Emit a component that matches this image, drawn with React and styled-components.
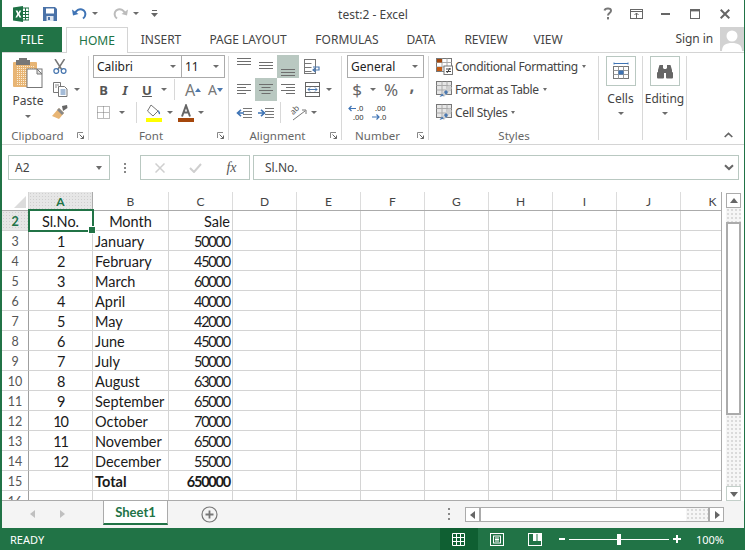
import React from "react";
import styled, { createGlobalStyle } from "styled-components";

const Global = createGlobalStyle`
  html, body { margin: 0; padding: 0; background: #fff; overflow: hidden; }
  * { box-sizing: border-box; }
`;
const UI = `"Noto Sans", "Open Sans", sans-serif`;
const CELL = `Lato, "Noto Sans", sans-serif`;
const GREEN = "#217346";

const Window = styled.div`
  width: 745px; height: 550px; background: #fff; display: flex; flex-direction: column;
  border-left: 2px solid ${GREEN}; border-right: 1px solid ${GREEN};
  font-family: ${UI}; color: #444; overflow: hidden;
`;
const TitleBar = styled.div`
  height: 27px; display: grid; grid-template-columns: 1fr auto 1fr; align-items: center; flex: none;
`;
const Qat = styled.div`display: flex; align-items: center; padding-left: 11px;`;
const Slot = styled.div`
  width: ${p => p.$w}px; height: ${p => p.$h || 23}px; display: flex; align-items: center; justify-content: center; flex: none;
  font-size: ${p => p.$fs || 12}px; color: ${p => p.$c || "#555"}; font-weight: ${p => p.$b ? 700 : 400};
  font-style: ${p => p.$i ? "italic" : "normal"};
  text-decoration: ${p => p.$u ? "underline" : "none"};
  padding-bottom: ${p => p.$pb || 0}px;
  background: ${p => p.$active ? "#b9c8c1" : "transparent"};
  font-family: ${p => p.$serif ? `"Liberation Serif", serif` : "inherit"};
`;
const Title = styled.div`font-size: 12px; color: #444; padding-top: 1px;`;
const WinButtons = styled.div`display: flex; justify-content: flex-end; align-items: center;`;

const TabRow = styled.div`
  height: 26px; display: flex; flex: none; border-bottom: 1px solid #d4d4d4; position: relative; align-items: stretch;
`;
const FileTab = styled.div`
  width: 60px; height: 25px; background: ${GREEN}; color: #fff; font-size: 12px; display: flex; align-items: center; justify-content: center; margin-right: 4px;
`;
const Tab = styled.div`
  width: ${p => p.$w}px; height: ${p => p.$active ? 26 : 25}px; display: flex; align-items: center; justify-content: center; font-size: 12px;
  color: ${p => p.$active ? GREEN : "#444"}; background: #fff; z-index: 1;
  border: ${p => p.$active ? "1px solid #d4d4d4" : "none"}; border-bottom: none;
`;
const SignIn = styled.div`
  margin-left: auto; display: flex; align-items: flex-start; font-size: 12px; color: #444; gap: 7px; letter-spacing: -.1px;
  span { line-height: 24px; }
`;
const Ribbon = styled.div`
  height: 92px; display: flex; flex: none; border-bottom: 1px solid #d4d4d4; padding-top: 2px;
`;
const Group = styled.div`
  width: ${p => p.$w}px; flex: none; display: flex; flex-direction: column; position: relative;
  &::after { content: ""; display: ${p => p.$last ? "none" : "block"}; position: absolute; right: 0; top: 1px; bottom: 4px; width: 1px; background: #d8d8d8; }
`;
const GroupBody = styled.div`height: 72px; display: flex; flex: none; padding-left: ${p => p.$pl || 0}px;`;
const Stack = styled.div`display: flex; flex-direction: column; align-items: ${p => p.$center ? "center" : "stretch"}; width: ${p => p.$w ? p.$w + "px" : "auto"}; flex: none;`;
const Row = styled.div`display: flex; align-items: center; height: 23px; flex: none;`;
const GroupFoot = styled.div`display: flex; align-items: center; height: 16px; padding-right: ${p => p.$pr ?? 5}px; justify-content: ${p => p.$end ? "flex-end" : "flex-start"};`;
const GroupLabel = styled.div`flex: 1; text-align: center; font-size: 11.5px; color: #666;`;
const Launcher = styled.svg`width: 7px; height: 7px; margin-left: 4px; flex: none;`;
const Caret = styled.span`
  display: inline-block; width: 0; height: 0; flex: none;
  border-left: ${p => p.$s || 3.5}px solid transparent; border-right: ${p => p.$s || 3.5}px solid transparent;
  border-top: ${p => p.$s ? 3 : 4}px solid #6c6c6c;
  margin-left: ${p => p.$ml || 0}px;
`;
const VSep = styled.div`width: 1px; height: 21px; background: #d8d8d8; flex: none; margin: 0 ${p => p.$m || 5}px;`;
const PasteLabel = styled.div`font-size: 12px; color: #444; margin-top: 1px; line-height: 17px;`;
const Select = styled.div`
  height: 23px; width: ${p => p.$w}px; border: 1px solid #ababab; margin-left: ${p => p.$ml || 0}px; display: flex; align-items: center; justify-content: space-between;
  padding: 0 5px 0 3px; font-size: 12px; color: #222; background: #fff; flex: none;
`;
const StyleRow = styled.div`
  display: flex; align-items: center; height: 23px; padding-left: 7px; gap: 2px; font-size: 12px; color: #444; white-space: nowrap; letter-spacing: -.36px;
`;
const BigBtn = styled.div`display: flex; flex-direction: column; align-items: center; padding: 1px 1px 0 0; width: 100%;`;
const BigBox = styled.div`
  width: 30px; height: 30px; border: 1px solid #b9c8c1; display: flex; align-items: center; justify-content: center; margin-bottom: 4px;
`;
const BigText = styled.div`font-size: 12px; color: #444; line-height: 17px; margin-bottom: 5px;`;

const FormulaRow = styled.div`
  height: 47px; flex: none; display: flex; padding: 10px 5px 12px 6px; align-items: stretch;
`;
const NameBox = styled.div`
  width: 102px; border: 1px solid #b9c8c1; display: flex; align-items: center; justify-content: space-between; padding: 0 7px 0 6px; font-size: 12px; color: #444;
`;
const Dots = styled.div`
  width: 30px; display: flex; flex-direction: column; align-items: center; justify-content: center; gap: 2px;
  i { width: 2px; height: 2px; background: #888; display: block; }
`;
const FxBox = styled.div`
  width: 110px; border: 1px solid #b9c8c1; display: flex; align-items: center; padding-left: 11px; margin-right: 3px;
`;
const FormulaInput = styled.div`
  flex: 1; border: 1px solid #b9c8c1; display: flex; align-items: center; justify-content: space-between; padding: 0 4px 0 11px; font-size: 12px; color: #444;
`;

const SheetArea = styled.div`height: 309px; flex: none; display: flex;`;
const Grid = styled.div`
  width: 720px; flex: none; height: 309px; overflow: hidden; position: relative; border-bottom: 1px solid #ababab; border-right: 1px solid #ababab;
`;
const HeadRow = styled.div`display: flex; height: 19px; border-bottom: 1px solid #ababab;`;
const Corner = styled.div`
  width: 27px; flex: none; border-right: 1px solid #d4d4d4; display: flex; align-items: flex-end; justify-content: flex-end; padding: 0 2px 2px 0;
`;
const ColHead = styled.div`
  width: ${p => p.$w}px; flex: none; display: flex; align-items: center; justify-content: center; font-size: 12px; padding-top: 1px;
  border-right: 1px solid ${p => p.$sel ? "#ababab" : "#dcdcdc"};
  color: ${p => p.$sel ? GREEN : "#444"}; font-weight: ${p => p.$sel ? 700 : 400};
  background: ${p => p.$sel ? "radial-gradient(#cfcfcf 0.7px, #e6e6e6 0.8px) 0 0 / 3px 3px" : "#fff"};
  font-family: ${CELL};
`;
const DataRow = styled.div`display: flex; height: 20px;`;
const RowHead = styled.div`
  width: 27px; flex: none; display: flex; align-items: center; justify-content: center; font-size: 12.5px; font-family: ${CELL};
  border-right: 1px solid #9f9f9f; border-bottom: 1px solid #d4d4d4; padding-top: 1px;
  color: ${p => p.$sel ? GREEN : "#555"}; font-weight: ${p => p.$sel ? 700 : 400};
  background: ${p => p.$sel ? "radial-gradient(#cfcfcf 0.7px, #e6e6e6 0.8px) 0 0 / 3px 3px" : "#fff"};
`;
const Cell = styled.div`
  width: ${p => p.$w}px; flex: none; border-right: 1px solid #d4d4d4; border-bottom: 1px solid #d4d4d4;
  font-family: ${CELL}; font-size: 14.5px; color: #1a1a1a; display: flex; align-items: center; padding: 1px 2px 0 2px; white-space: nowrap;
  justify-content: ${p => p.$a === "r" ? "flex-end" : p.$a === "c" ? "center" : "flex-start"};
  font-weight: ${p => p.$b ? 700 : 400};
  letter-spacing: ${p => p.$num ? "-1.2px" : "0"};
`;
const Selection = styled.div`
  position: absolute; left: 26px; top: 17px; width: 66px; height: 23px; border: 2px solid ${GREEN}; pointer-events: none;
  &::after { content: ""; position: absolute; right: -4px; bottom: -4px; width: 6px; height: 6px; background: ${GREEN}; border: 1px solid #fff; }
`;
const VScroll = styled.div`
  flex: 1; padding: 1px 3px 0 4px; display: flex; flex-direction: column;
`;
const ScrollBtn = styled.div`
  width: 15px; height: 15px; flex: none; border: 1px solid ${p => p.$strong ? "#ababab" : "#c3cfc9"}; display: flex; align-items: center; justify-content: center; background: #fff;
`;
const Track = styled.div`
  flex: ${p => p.$flex || "none"}; ${p => p.$size ? `${p.$dir === "h" ? "width" : "height"}: ${p.$size}px;` : ""}
  background: radial-gradient(#d8d8d8 0.7px, #f6f6f6 0.8px) 0 0 / 4px 4px;
`;
const VThumb = styled.div`height: 193px; width: 15px; flex: none; border: 2px solid #ababab; background: #fff;`;

const Strip = styled.div`height: 27px; flex: none; display: flex; align-items: flex-start; background: #f4f4f4;`;
const SheetTab = styled.div`
  width: 65px; height: 24px; background: #fff; border: 1px solid #ababab; border-top: none; border-bottom: 2px solid ${GREEN};
  color: ${GREEN}; font-family: ${CELL}; font-weight: 700; font-size: 13px; display: flex; align-items: center; justify-content: center;
`;
const NavZone = styled.div`width: 101px; height: 26px; display: flex; align-items: center; flex: none; padding-left: 27px; gap: 21px;`;
const AddBtn = styled.div`width: 17px; height: 17px; margin: 5px 0 0 33px; flex: none; display: flex;`;
const StripDots = styled(Dots)`width: 4px; height: 26px; margin-left: 229px; gap: 3px;`;
const HScroll = styled.div`display: flex; height: 15px; margin: 6px 0 0 14px; width: 259px; flex: none; border: 1px solid #ababab;`;
const HBtn = styled.div`width: 15px; flex: none; background: #fff; display: flex; align-items: center; justify-content: center; border-${p => p.$side}: 2px solid #ababab;`;
const HThumb = styled.div`flex: 1; background: #fff;`;

const StatusBar = styled.div`
  height: 22px; background: ${GREEN}; color: #fff; display: flex; align-items: center; padding: 0 20px 0 8px; font-size: 11px; flex: none;
`;
const Ready = styled.div`margin-right: auto;`;
const ViewBtn = styled.div`
  width: 38px; height: 22px; display: flex; align-items: center; justify-content: center; background: ${p => p.$active ? "#0f5f32" : "transparent"};
`;
const Zoom = styled.div`display: flex; align-items: center; margin-left: 5px; gap: 4px;`;
const Slider = styled.div`
  width: 100px; height: 1px; background: #fff; position: relative;
  &::after { content: ""; position: absolute; left: 48px; top: -5px; width: 4px; height: 11px; background: #fff; }
`;
const Percent = styled.div`margin-left: 15px; font-size: 11px;`;

const I = ({ w, h, children, vb }) => <svg width={w} height={h} viewBox={vb || `0 0 ${w} ${h}`} fill="none" style={{ display: "block", flex: "none" }}>{children}</svg>;

const ExcelLogo = () => <I w={16} h={16}>
  <rect x="6" y="2" width="10" height="12" fill="#fff" stroke="#1e6f42" />
  <path d="M9.5 2v12M12.5 2v12M6 5.5h10M6 8.5h10M6 11.5h10" stroke="#1e6f42" />
  <path d="M0 1.5 10 0v16L0 14.5z" fill="#1e7145" />
  <path d="M2.6 4.6h1.9L5.5 6.8l1-2.2h1.8L6.5 8l1.9 3.6H6.5L5.3 9.2 4.2 11.6H2.4L4.3 8z" fill="#fff" />
</I>;
const SaveIcon = () => <I w={14} h={14}>
  <path d="M0 0h12l2 2v12H0z" fill="#4a72a8" />
  <rect x="3" y="1.5" width="8" height="5" fill="#fff" />
  <rect x="3.5" y="9" width="7" height="5" fill="#dfe6f0" />
  <rect x="5" y="10" width="2" height="3" fill="#4a72a8" />
</I>;
const Undo = ({ c, flip }) => <I w={15} h={13}>
  <g transform={flip ? "translate(15 0) scale(-1 1)" : undefined}>
    <path d="M3 6.5C4 3 7.5 1.5 10 2.5c3 1 4 4 3 6.5-.5 1.2-1.3 2-2 2.6" stroke={c} strokeWidth="2" />
    <path d="M0 2.5 1 8.5 6.5 7z" fill={c} />
  </g>
</I>;
const Customize = () => <I w={7} h={8}><path d="M1 .5h5" stroke="#666" /><path d="M0 3h7L3.5 7z" fill="#666" /></I>;
const Help = () => <I w={10} h={13}><path d="M1.5 3.5C2 1 8 .5 8 3.7c0 2.3-3 2.2-3 4.8" stroke="#777" strokeWidth="2" /><rect x="4" y="10" width="2" height="2.4" fill="#777" /></I>;
const RibbonOpt = () => <I w={13} h={10}><rect x=".5" y=".5" width="12" height="9" stroke="#666" /><path d="M.5 2.5h12" stroke="#666" /><path d="M6.5 9V4M4.5 6l2-2 2 2" stroke="#666" /></I>;
const Min = () => <I w={9} h={2}><rect width="9" height="2" fill="#666" /></I>;
const Max = () => <I w={10} h={10}><rect x=".5" y=".5" width="9" height="9" stroke="#666" /><rect width="10" height="2.4" fill="#666" /></I>;
const CloseX = () => <I w={10} h={10}><path d="M.7.7l8.6 8.6M9.3.7.7 9.3" stroke="#666" strokeWidth="2" /></I>;
const Avatar = () => <I w={24} h={24}>
  <rect width="24" height="24" fill="#d2d2d2" />
  <circle cx="12" cy="9" r="5.5" fill="#fff" />
  <path d="M2 24c0-6 4-8 10-8s10 2 10 8z" fill="#fff" />
</I>;
const PasteIcon = () => <I w={30} h={30}>
  <defs><pattern id="pd" width="2" height="2" patternUnits="userSpaceOnUse"><rect width="2" height="2" fill="#e8b574" /><rect width="1" height="1" fill="#fbeed6" /></pattern></defs>
  <rect x="0" y="4" width="24" height="25" rx="1" fill="#e8b574" />
  <path d="M3 8h18v20H3z" fill="url(#pd)" />
  <path d="M6 0h8v2h3v5H3V2h3z" fill="#777" />
  <rect x="14" y="11" width="15" height="18.5" fill="#fff" stroke="#777" />
  <path d="M24 11l5 5h-5z" fill="#ddd" stroke="#777" />
</I>;
const Scissors = () => <I w={14} h={15}>
  <path d="M2 0l7 11M11.5 0 4.5 11" stroke="#777" strokeWidth="1.5" />
  <circle cx="3.3" cy="12" r="2.4" stroke="#4a78b0" strokeWidth="1.3" />
  <circle cx="10.6" cy="12" r="2.4" stroke="#4a78b0" strokeWidth="1.3" />
</I>;
const CopyIcon = () => <I w={15} h={15}>
  <path d="M.5.5h7v10h-7z" fill="#fff" stroke="#777" />
  <path d="M5.5 4.5h6l2.5 2.5v7.5H5.5z" fill="#fff" stroke="#777" />
  <path d="M7.5 8h5M7.5 10h5M7.5 12h5" stroke="#4a78b0" />
  <path d="M2 3h4M2 5h2" stroke="#888" />
</I>;
const BrushIcon = () => <I w={16} h={15}>
  <path d="M10 1 15 0 15.5 3 11 6z" fill="#666" />
  <path d="M7 3l5 5-5 6L0 11z" fill="#e8b574" />
  <path d="M7 3l5 5-2 2-5-5z" fill="#888" />
</I>;
const Launch = () => <Launcher viewBox="0 0 7 7" fill="none"><path d="M.5 6V.5H6" stroke="#888" /><path d="M2.5 2.5 6.5 6.5M6.5 3.5v3h-3" stroke="#666" /></Launcher>;
const BordersIcon = () => <I w={13} h={13}><path d="M.5.5h12v12H.5zM6.5.5v12M.5 6.5h12" stroke="#777" strokeDasharray="1 1" /></I>;
const FillIcon = () => <I w={16} h={18}>
  <path d="M5 1 12 7 7 12 1.5 7z" fill="#fff" stroke="#777" />
  <path d="M12 6c1.5 1 2.5 3 2 4-.7 1-2-.5-2-4z" fill="#4a78b0" />
  <rect y="14" width="16" height="4" fill="#ffff00" />
</I>;
const ColorA = () => <I w={16} h={18}><path d="M4 12.5 8 1.5 12 12.5M5.5 8.5h5" stroke="#666" strokeWidth="2" /><rect y="14" width="16" height="4" fill="#a5470c" /></I>;
const Tri = ({ up = true }) => <I w={6} h={4}><path d={up ? "M0 4h6L3 0z" : "M0 0h6L3 4z"} fill="#4a78b0" /></I>;
const Lines = ({ ws, al, y0, gap = 3 }) => <I w={14} h={23}>
  {ws.map((w, i) => {
    const x = al === "l" ? 0 : al === "r" ? 14 - w : (14 - w) / 2;
    return <rect key={i} x={x} y={y0 + i * gap} width={w} height="1" fill="#6e6e6e" />;
  })}
</I>;
const Wrap = () => <I w={17} h={16}>
  <path d="M.5.5h11M.5 4.5h7M.5 8.5h7M.5 12.5h7" stroke="#777" />
  <rect x=".5" y=".5" width="11" height="14" stroke="#777" />
  <path d="M9 8h6v3H9.5M11.5 9 9 11l2.5 2" stroke="#4a78b0" strokeWidth="1.2" />
</I>;
const Merge = () => <I w={15} h={15}>
  <rect x=".5" y=".5" width="14" height="14" stroke="#666" />
  <path d="M.5 4.5h14M.5 10.5h14" stroke="#666" />
  <path d="M3 7.5h9M3 7.5l2-2M3 7.5l2 2M12 7.5l-2-2M12 7.5l-2 2" stroke="#4a78b0" />
</I>;
const Indent = ({ flip }) => <I w={16} h={10}>
  <path d="M7 .5h9M7 3.5h9M7 6.5h9M7 9.5h9" stroke="#777" />
  <g transform={flip ? "translate(8 0) scale(-1 1)" : undefined}>
    <path d="M8 5H2M5 1.8 1.5 5 5 8.2" stroke="#3f74b5" strokeWidth="1.6" />
  </g>
</I>;
const Orient = () => <I w={20} h={20}>
  <g transform="rotate(-45 8 8)"><text x="3" y="9" fontSize="8" fontFamily="Noto Sans" fill="#555">ab</text></g>
  <path d="M5 17 17 8M14 7h4v4" stroke="#777" />
</I>;
const DecIcon = ({ a, b, dir }) => <I w={20} h={18}>
  <text x={dir === "l" ? 10 : 6} y="7" fontSize="7.5" fontFamily="Noto Sans" fill="#333">{a}</text>
  <text x={dir === "l" ? 6 : 11} y="16" fontSize="7.5" fontFamily="Noto Sans" fill="#333">{b}</text>
  <path d={dir === "l" ? "M9 4.5H2M4.5 2 2 4.5 4.5 7" : "M3 13h7M7.5 10.5 10 13l-2.5 2.5"} stroke="#3f74b5" strokeWidth="1.2" />
</I>;
const CondIcon = () => <I w={17} h={17}>
  <rect x=".5" y=".5" width="15" height="13" stroke="#777" fill="#fff" />
  <path d="M.5 4.5h15M.5 9h15M6 .5v13M11 .5v13" stroke="#aaa" />
  <rect x="1" y="1" width="5" height="3.5" fill="#a5470c" /><rect x="1" y="9" width="5" height="4" fill="#c65b12" />
  <rect x="8" y="8" width="8.5" height="8.5" fill="#fff" stroke="#777" />
  <path d="M10 11h5M10 13.5h5M14 10l-3 5" stroke="#444" />
</I>;
const TableIcon = () => <I w={17} h={17}>
  <rect x=".5" y=".5" width="15" height="13" stroke="#777" fill="#e6e6e6" />
  <path d="M.5 4.5h15M.5 9h15M6 .5v13M11 .5v13" stroke="#aaa" />
  <path d="M5 14 13 4l3 3-8 9z" fill="#cfcfcf" />
  <path d="M3.5 16 6 12.5l2 2z" fill="#4a78b0" />
  <path d="M8 11l2-2 2 2-2 3z" fill="#4a78b0" />
</I>;
const CellsIcon = () => <I w={16} h={18}>
  <path d="M1 1.5h14M1 .5v2M15 .5v2" stroke="#3f74b5" />
  <rect x=".5" y="4.5" width="15" height="12" stroke="#777" />
  <path d="M.5 8.5h15M.5 12.5h15M5.5 4.5v12M10.5 4.5v12" stroke="#999" />
  <rect x="5.5" y="8.5" width="5" height="4" fill="#3f74b5" />
</I>;
const Binoc = () => <I w={16} h={15}>
  <path d="M2.5 1h3.5v3L7 5v5H1V6zM13.5 1H10v3L9 5v5h6V6z" fill="#666" />
  <rect x="0" y="8" width="7" height="6.5" rx="1" fill="#666" /><rect x="9" y="8" width="7" height="6.5" rx="1" fill="#666" />
  <rect x="6" y="5" width="4" height="4" fill="#666" />
</I>;
const Collapse = () => <I w={9} h={6}><path d="M.7 5 4.5 1.4 8.3 5" stroke="#666" strokeWidth="1.7" /></I>;
const Chevron = () => <I w={10} h={7}><path d="M1 1.2 5 5l4-3.8" stroke="#666" strokeWidth="2" /></I>;
const XIcon = () => <I w={10} h={10}><path d="M.5.5l9 9M9.5.5l-9 9" stroke="#cfcfcf" strokeWidth="1.5" /></I>;
const Check = () => <I w={13} h={10}><path d="M1 5l4 4 7-8" stroke="#cfcfcf" strokeWidth="2" /></I>;
const CornerTri = () => <I w={12} h={12}><path d="M12 0v12H0z" fill="#dcdcdc" /></I>;
const Arrow = ({ d, c = "#666", s = 8 }) => <I w={s} h={s} vb="0 0 8 8"><path d={{ u: "M0 6h8L4 1z", d: "M0 2h8L4 7z", l: "M6 0v8L1 4z", r: "M2 0v8l5-4z" }[d]} fill={c} /></I>;
const Plus = () => <I w={17} h={17}><circle cx="8.5" cy="8.5" r="7.5" stroke="#777" strokeWidth="1.2" /><path d="M4.5 8.5h8M8.5 4.5v8" stroke="#777" strokeWidth="1.8" /></I>;
const VNormal = () => <I w={13} h={13}><path d="M.5.5h12v12H.5zM4.5.5v12M8.5.5v12M.5 4.5h12M.5 8.5h12" stroke="#fff" /></I>;
const VLayout = () => <I w={14} h={13}><rect x=".5" y=".5" width="13" height="12" stroke="#fff" /><rect x="3.5" y="3" width="7" height="7" stroke="#fff" /><path d="M5 5h4M5 6.5h4M5 8h4" stroke="#fff" /></I>;
const VBreak = () => <I w={14} h={13}><rect x=".5" y=".5" width="13" height="12" stroke="#fff" /><rect x="5" y="1" width="3.5" height="7" fill="#fff" /><rect x="9.5" y="1" width="3.5" height="7" fill="#fff" /></I>;
const ZMinus = () => <I w={6} h={2}><rect width="6" height="2" fill="#fff" /></I>;
const ZPlus = () => <I w={8} h={8}><path d="M0 4h8M4 0v8" stroke="#fff" strokeWidth="2" /></I>;

const cols = [["A", 64], ["B", 76], ["C", 64], ["D", 64], ["E", 64], ["F", 64], ["G", 64], ["H", 64], ["I", 64], ["J", 64], ["K", 64]];
const data = [
  [2, "Sl.No.", "Month", "Sale"], [3, 1, "January", 50000], [4, 2, "February", 45000], [5, 3, "March", 60000],
  [6, 4, "April", 40000], [7, 5, "May", 42000], [8, 6, "June", 45000], [9, 7, "July", 50000],
  [10, 8, "August", 63000], [11, 9, "September", 65000], [12, 10, "October", 70000], [13, 11, "November", 65000],
  [14, 12, "December", 55000], [15, "", "Total", 650000], [16, "", "", ""],
];

export default function App() {
  return (
    <>
      <Global />
      <Window>
        <TitleBar>
          <Qat>
            <ExcelLogo />
            <Slot $w={14} /><SaveIcon />
            <Slot $w={15} /><Undo c="#3f74b5" />
            <Slot $w={16}><Caret $s={3} /></Slot>
            <Slot $w={10} /><Undo c="#bcbcbc" flip />
            <Slot $w={16}><Caret $s={3} /></Slot>
            <Slot $w={7} /><Customize />
          </Qat>
          <Title>test:2 - Excel</Title>
          <WinButtons>
            <Slot $w={28}><Help /></Slot>
            <Slot $w={29}><RibbonOpt /></Slot>
            <Slot $w={29}><Min /></Slot>
            <Slot $w={30}><Max /></Slot>
            <Slot $w={29}><CloseX /></Slot>
            <Slot $w={5} />
          </WinButtons>
        </TitleBar>
        <TabRow>
          <FileTab>FILE</FileTab>
          <Tab $w={62} $active>HOME</Tab>
          <Tab $w={66}>INSERT</Tab>
          <Tab $w={108}>PAGE LAYOUT</Tab>
          <Tab $w={90}>FORMULAS</Tab>
          <Tab $w={58}>DATA</Tab>
          <Tab $w={72}>REVIEW</Tab>
          <Tab $w={52}>VIEW</Tab>
          <SignIn><span>Sign in</span><Avatar /></SignIn>
        </TabRow>
        <Ribbon>
          <Group $w={87}>
            <GroupBody $pl={4}>
              <Stack $w={44} $center>
                <Slot $w={30} $h={36}><PasteIcon /></Slot>
                <PasteLabel>Paste</PasteLabel>
                <Slot $w={20} $h={14}><Caret $s={3} /></Slot>
              </Stack>
              <Stack>
                <Row><Slot $w={20}><Scissors /></Slot></Row>
                <Row><Slot $w={20}><CopyIcon /></Slot><Caret $s={3} $ml={4} /></Row>
                <Row><Slot $w={20}><BrushIcon /></Slot></Row>
              </Stack>
            </GroupBody>
            <GroupFoot><GroupLabel>Clipboard</GroupLabel><Launch /></GroupFoot>
          </Group>
          <Group $w={140}>
            <GroupBody $pl={4}>
              <Stack>
                <Row>
                  <Select $w={89}><span>Calibri</span><Caret $s={3} /></Select>
                  <Select $w={44} $ml={-1}><span>11</span><Caret $s={3} /></Select>
                </Row>
                <Row>
                  <Slot $w={21} $b $fs={13}>B</Slot>
                  <Slot $w={22} $i $fs={13} $b>I</Slot>
                  <Slot $w={22} $b $fs={13} $u>U</Slot>
                  <Slot $w={11}><Caret $s={3} /></Slot>
                  <VSep $m={5} />
                  <Slot $w={26} $fs={16} $c="#777"><span>A</span><Tri /></Slot>
                  <Slot $w={19} $fs={14} $c="#777"><span>A</span><Tri up={false} /></Slot>
                </Row>
                <Row>
                  <Slot $w={21}><BordersIcon /></Slot>
                  <Slot $w={16}><Caret $s={3} /></Slot>
                  <VSep $m={6} />
                  <Slot $w={22}><FillIcon /></Slot>
                  <Slot $w={10}><Caret $s={3} /></Slot>
                  <Slot $w={22}><ColorA /></Slot>
                  <Slot $w={8}><Caret $s={3} /></Slot>
                </Row>
              </Stack>
            </GroupBody>
            <GroupFoot><GroupLabel>Font</GroupLabel><Launch /></GroupFoot>
          </Group>
          <Group $w={113}>
            <GroupBody $pl={4}>
              <Stack>
                <Row>
                  <Slot $w={22}><Lines ws={[14, 14, 14]} al="l" y0={3} /></Slot>
                  <Slot $w={22}><Lines ws={[14, 14, 14]} al="l" y0={7} /></Slot>
                  <Slot $w={22} $active><Lines ws={[14, 14, 14]} al="l" y0={14} /></Slot>
                  <Slot $w={26}><Wrap /></Slot>
                </Row>
                <Row>
                  <Slot $w={22}><Lines ws={[14, 9, 14, 9]} al="l" y0={6} /></Slot>
                  <Slot $w={22} $active><Lines ws={[14, 9, 14, 9]} al="c" y0={6} /></Slot>
                  <Slot $w={22}><Lines ws={[14, 9, 14, 9]} al="r" y0={6} /></Slot>
                  <Slot $w={26}><Merge /></Slot>
                  <Slot $w={8}><Caret $s={3} /></Slot>
                </Row>
                <Row>
                  <Slot $w={22}><Indent /></Slot>
                  <Slot $w={22}><Indent flip /></Slot>
                  <VSep $m={3} />
                  <Slot $w={27}><Orient /></Slot>
                  <Caret $s={3} />
                </Row>
              </Stack>
            </GroupBody>
            <GroupFoot><GroupLabel>Alignment</GroupLabel><Launch /></GroupFoot>
          </Group>
          <Group $w={87}>
            <GroupBody $pl={5}>
              <Stack>
                <Select $w={77}><span>General</span><Caret $s={3} /></Select>
                <Row>
                  <Slot $w={20} $fs={17} $c="#666">$</Slot>
                  <Slot $w={12}><Caret $s={3} /></Slot>
                  <Slot $w={24} $fs={17} $c="#666">%</Slot>
                  <Slot $w={18} $fs={17} $b $c="#666" $pb={9}>,</Slot>
                </Row>
                <Row>
                  <Slot $w={20}><DecIcon a=".0" b=".00" dir="l" /></Slot>
                  <Slot $w={24}><DecIcon a=".00" b=".0" dir="r" /></Slot>
                </Row>
              </Stack>
            </GroupBody>
            <GroupFoot><GroupLabel>Number</GroupLabel><Launch /></GroupFoot>
          </Group>
          <Group $w={170}>
            <GroupBody>
              <Stack>
                <StyleRow><CondIcon /><span>Conditional Formatting</span><Caret $s={2.5} $ml={2} /></StyleRow>
                <StyleRow><TableIcon /><span>Format as Table</span><Caret $s={2.5} $ml={2} /></StyleRow>
                <StyleRow><TableIcon /><span>Cell Styles</span><Caret $s={2.5} $ml={2} /></StyleRow>
              </Stack>
            </GroupBody>
            <GroupFoot $pr={0}><GroupLabel>Styles</GroupLabel></GroupFoot>
          </Group>
          <Group $w={44}>
            <BigBtn>
              <BigBox><CellsIcon /></BigBox>
              <BigText>Cells</BigText>
              <Caret $s={3} />
            </BigBtn>
          </Group>
          <Group $w={44}>
            <BigBtn>
              <BigBox><Binoc /></BigBox>
              <BigText>Editing</BigText>
              <Caret $s={3} />
            </BigBtn>
          </Group>
          <Group $last $w={57}>
            <GroupBody />
            <GroupFoot $pr={11} $end><Collapse /></GroupFoot>
          </Group>
        </Ribbon>
        <FormulaRow>
          <NameBox><span>A2</span><Caret /></NameBox>
          <Dots><i /><i /><i /></Dots>
          <FxBox>
            <Slot $w={15} $h={20}><XIcon /></Slot>
            <Slot $w={21} $h={20} />
            <Slot $w={15} $h={20}><Check /></Slot>
            <Slot $w={21} $h={20} />
            <Slot $w={15} $h={20} $i $serif $fs={14} $c="#555">fx</Slot>
          </FxBox>
          <FormulaInput><span>Sl.No.</span><Chevron /></FormulaInput>
        </FormulaRow>
        <SheetArea>
          <Grid>
            <HeadRow>
              <Corner><CornerTri /></Corner>
              {cols.map(([n, w], i) => <ColHead key={n} $w={w} $sel={i === 0}>{n}</ColHead>)}
            </HeadRow>
            {data.map(([r, a, b, c]) => {
              const head = r === 2, total = r === 15;
              return (
                <DataRow key={r}>
                  <RowHead $sel={head}>{r}</RowHead>
                  <Cell $w={64} $a="c" $num={typeof a === "number"}>{a}</Cell>
                  <Cell $w={76} $a={head ? "c" : undefined} $b={total}>{b}</Cell>
                  <Cell $w={64} $a="r" $b={total} $num={typeof c === "number"}>{c}</Cell>
                  {cols.slice(3).map(([n, w]) => <Cell key={n} $w={w} />)}
                </DataRow>
              );
            })}
            <Selection />
          </Grid>
          <VScroll>
            <ScrollBtn $strong><Arrow d="u" /></ScrollBtn>
            <Track $size={14} />
            <VThumb />
            <Track $flex="1" />
            <ScrollBtn><Arrow d="d" /></ScrollBtn>
          </VScroll>
        </SheetArea>
        <Strip>
          <NavZone><Arrow d="l" c="#c0c0c0" /><Arrow d="r" c="#c0c0c0" /></NavZone>
          <SheetTab>Sheet1</SheetTab>
          <AddBtn><Plus /></AddBtn>
          <StripDots><i /><i /><i /></StripDots>
          <HScroll>
            <HBtn $side="right"><Arrow d="l" /></HBtn>
            <HThumb />
            <Track $size={22} $dir="h" />
            <HBtn $side="left"><Arrow d="r" /></HBtn>
          </HScroll>
        </Strip>
        <StatusBar>
          <Ready>READY</Ready>
          <ViewBtn $active><VNormal /></ViewBtn>
          <ViewBtn><VLayout /></ViewBtn>
          <ViewBtn><VBreak /></ViewBtn>
          <Zoom><ZMinus /><Slider /><ZPlus /></Zoom>
          <Percent>100%</Percent>
        </StatusBar>
      </Window>
    </>
  );
}
